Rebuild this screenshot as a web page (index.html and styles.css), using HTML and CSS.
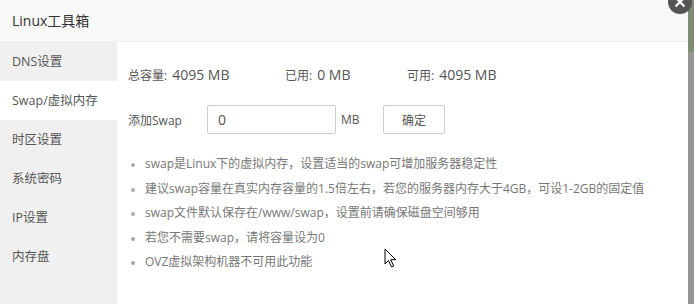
FILE: index.html
```html
<!DOCTYPE html>
<html lang="zh-CN">
<head>
<meta charset="utf-8">
<title>Linux工具箱</title>
<link rel="stylesheet" href="styles.css">
</head>
<body>
<div class="screen">
  <div class="layer">
    <div class="layer-title">Linux工具箱</div>
    <div class="layer-body">
      <ul class="tab-nav">
        <li>DNS设置</li>
        <li class="on">Swap/虚拟内存</li>
        <li>时区设置</li>
        <li>系统密码</li>
        <li>IP设置</li>
        <li>内存盘</li>
      </ul>
      <div class="tab-con">
        <div class="swap-info">
          <span class="item">总容量:<b>4095 MB</b></span>
          <span class="item">已用:<b>0 MB</b></span>
          <span class="item">可用:<b>4095 MB</b></span>
        </div>
        <div class="swap-add">
          <span class="label">添加Swap</span>
          <input class="bt-input" type="text" value="0">
          <span class="unit">MB</span>
          <button class="btn">确定</button>
        </div>
        <ul class="help">
          <li>swap是Linux下的虚拟内存，设置适当的swap可增加服务器稳定性</li>
          <li>建议swap容量在真实内存容量的1.5倍左右，若您的服务器内存大于4GB，可设1-2GB的固定值</li>
          <li>swap文件默认保存在/www/swap，设置前请确保磁盘空间够用</li>
          <li>若您不需要swap，请将容量设为0</li>
          <li>OVZ虚拟架构机器不可用此功能</li>
        </ul>
      </div>
    </div>
    <span class="close"><svg width="24" height="24" viewBox="0 0 24 24"><circle cx="12" cy="12" r="12" fill="#555"/><path d="M7.5 7.5l9 9M16.5 7.5l-9 9" stroke="#fff" stroke-width="2.2"/></svg></span>
  </div>
  <div class="shade"></div>
</div>
<svg class="cursor" width="14" height="22" viewBox="0 0 14 22"><path d="M1 1v15l3.5-3.5 3 6.5 2.2-1-3-6.3h5z" fill="#fff" stroke="#000" stroke-width="1"/></svg>
</body>
</html>
```

FILE: styles.css
```css
body,div,ul,li,input,button{margin:0;padding:0;}
body{font-family:"Open Sans","Noto Sans CJK SC",sans-serif;font-size:12px;color:#555;background:#fff;overflow:hidden;}
ul{list-style:none;}

.screen{display:flex;width:694px;height:304px;}
.layer{position:relative;width:688px;height:304px;display:flex;flex-direction:column;background:#fff;}
.shade{width:6px;background:linear-gradient(#7d8a74 0,#7d8a74 52px,#969696 52px);}

.layer-title{height:41px;line-height:41px;padding-left:12px;font-size:14px;color:#333;background:#f8f8f8;border-bottom:1px solid #eee;}
.layer-body{flex:1;display:flex;}

.tab-nav{width:117px;background:#f0f0f0;}
.tab-nav li{height:39px;line-height:39px;padding-left:12px;font-size:12.5px;color:#555;}
.tab-nav li.on{background:#fff;}

.tab-con{flex:1;padding:20px 0 0 11px;}
.swap-info{display:flex;height:26px;line-height:26px;}
.swap-info .item{font-size:12px;}
.swap-info .item:nth-child(1){width:157px;}
.swap-info .item:nth-child(2){width:122px;}
.swap-info b{font-weight:normal;font-size:14px;margin-left:5px;color:#555;}

.swap-add{display:flex;align-items:center;margin-top:17px;height:29px;}
.swap-add .label{width:79px;}
.bt-input{width:129px;height:29px;box-sizing:border-box;border:1px solid #ccc;border-radius:2px;padding-left:10px;font:14px "Open Sans",sans-serif;color:#555;outline:none;}
.swap-add .unit{margin-left:5px;width:42px;}
.btn{width:62px;height:29px;border:1px solid #ccc;border-radius:2px;background:#fff;font:12px "Open Sans","Noto Sans CJK SC",sans-serif;color:#555;}

.help{margin-top:18px;padding-left:17px;color:#777;}
.help li{position:relative;line-height:24.5px;}
.help li:before{content:"";position:absolute;left:-14px;top:11px;width:4px;height:4px;border-radius:50%;background:#aaa;}

.close{position:absolute;right:-4px;top:-10px;}
.cursor{position:absolute;left:384px;top:248px;}
```
